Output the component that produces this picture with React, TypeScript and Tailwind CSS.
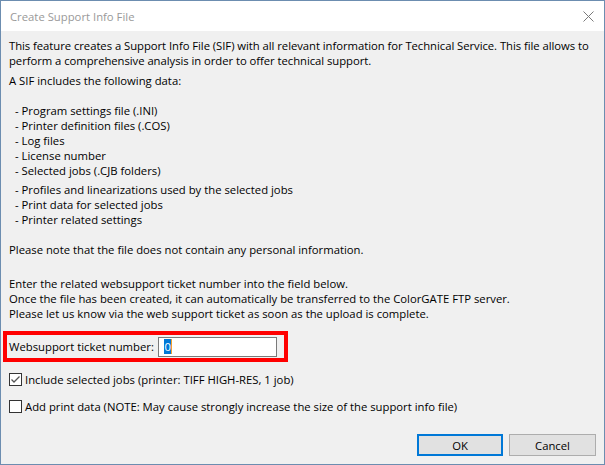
import React from "react";

const font = { fontFamily: '"Open Sans", "Noto Sans", sans-serif' };

export default function App() {
  return (
    <div
      className="w-[605px] h-[465px] border border-[#6c8db0] bg-[#f0f0f0] flex flex-col text-[11.3px] text-black overflow-hidden"
      style={font}
    >
      {/* Title bar */}
      <div className="h-[30px] bg-white flex items-center justify-between pl-[9px] pr-[9px] shrink-0">
        <span className="text-[#999999] text-[11.3px] leading-[15px]">Create Support Info File</span>
        <svg width="11" height="11" viewBox="0 0 11 11" className="mr-[1px]">
          <path d="M0.5 0.5 L10.5 10.5 M10.5 0.5 L0.5 10.5" stroke="#7a7a7a" strokeWidth="1" />
        </svg>
      </div>

      {/* Content */}
      <div className="flex-1 flex flex-col px-[8px] pt-[7px] pb-[8px] leading-[15px] whitespace-nowrap">
        <div className="tracking-[-0.05px]">
          This feature creates a Support Info File (SIF) with all relevant information for Technical Service. This file allows to
          <br />
          perform a comprehensive analysis in order to offer technical support.
        </div>
        <div className="mt-[5px]">A SIF includes the following data:</div>

        <div className="mt-[15px] pl-[6px]">
          <div>- Program settings file (.INI)</div>
          <div>- Printer definition files (.COS)</div>
          <div>- Log files</div>
          <div>- License number</div>
          <div>- Selected jobs (.CJB folders)</div>
          <div className="mt-[4px]">- Profiles and linearizations used by the selected jobs</div>
          <div>- Print data for selected jobs</div>
          <div>- Printer related settings</div>
        </div>

        <div className="mt-[15px]">Please note that the file does not contain any personal information.</div>

        <div className="mt-[19px]">
          Enter the related websupport ticket number into the field below.
          <br />
          Once the file has been created, it can automatically be transferred to the ColorGATE FTP server.
          <br />
          Please let us know via the web support ticket as soon as the upload is complete.
        </div>

        {/* Red highlighted ticket field */}
        <div className="mt-[10px] -ml-[6px] w-[285px] h-[31px] border-4 border-[#ff0000] flex items-center pl-[2px]">
          <span>Websupport ticket number:</span>
          <div className="ml-auto mr-[7px] w-[119px] h-[20px] bg-white border border-[#7a7a7a] flex items-center pl-[5px]">
            <span className="bg-[#0078d7] text-white leading-[15px] px-[0.5px]">0</span>
            <span className="w-[1px] h-[15px] bg-[#f0a030]"></span>
          </div>
        </div>

        {/* Checkboxes */}
        <label className="mt-[10px] flex items-center gap-[3px] h-[15px]">
          <span className="w-[13px] h-[13px] border border-[#333333] bg-white flex items-center justify-center">
            <svg width="11" height="11" viewBox="0 0 11 11">
              <path d="M1.5 5.5 L4 8 L9.5 2.5" stroke="#555555" strokeWidth="1.3" fill="none" />
            </svg>
          </span>
          <span>Include selected jobs (printer: TIFF HIGH-RES, 1 job)</span>
        </label>
        <label className="mt-[12px] flex items-center gap-[3px] h-[15px]">
          <span className="w-[13px] h-[13px] border border-[#333333] bg-white"></span>
          <span>Add print data (NOTE: May cause strongly increase the size of the support info file)</span>
        </label>

        {/* Buttons */}
        <div className="mt-auto flex justify-end gap-[6px]">
          <button className="w-[86px] h-[22px] border-2 border-[#0078d7] bg-[#e1e1e1] flex items-center justify-center leading-[15px]">
            OK
          </button>
          <button className="w-[87px] h-[22px] border border-[#adadad] bg-[#e1e1e1] flex items-center justify-center leading-[15px]">
            Cancel
          </button>
        </div>
      </div>
    </div>
  );
}
